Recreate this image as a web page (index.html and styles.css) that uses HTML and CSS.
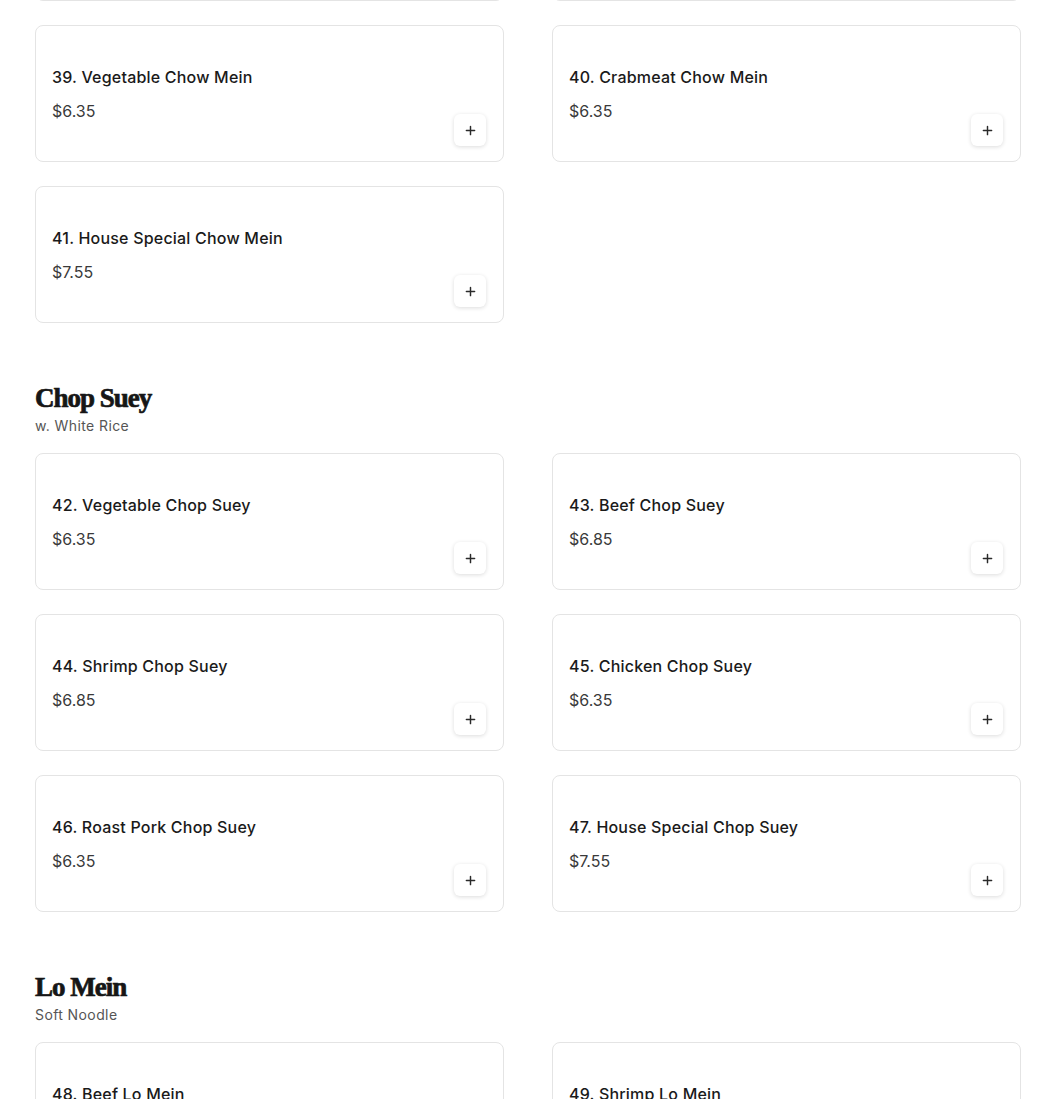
FILE: index.html
```html
<!DOCTYPE html>
<html lang="en">
<head>
<meta charset="utf-8">
<title>Menu</title>
<link rel="stylesheet" href="styles.css">
</head>
<body>
<main class="menu">
  <section class="section section-first">
    <div class="grid">
      <div class="card card-stub" aria-hidden="true"></div>
      <div class="card card-stub" aria-hidden="true"></div>
      <div class="card"><div class="info"><div class="name">39. Vegetable Chow Mein</div><div class="price">$6.35</div></div><button class="add" aria-label="Add"><svg viewBox="0 0 12 12" width="12" height="12"><path d="M6 1.5v9M1.5 6h9" stroke="currentColor" stroke-width="1.6" fill="none" stroke-linecap="round"/></svg></button></div>
      <div class="card"><div class="info"><div class="name">40. Crabmeat Chow Mein</div><div class="price">$6.35</div></div><button class="add" aria-label="Add"><svg viewBox="0 0 12 12" width="12" height="12"><path d="M6 1.5v9M1.5 6h9" stroke="currentColor" stroke-width="1.6" fill="none" stroke-linecap="round"/></svg></button></div>
      <div class="card"><div class="info"><div class="name">41. House Special Chow Mein</div><div class="price">$7.55</div></div><button class="add" aria-label="Add"><svg viewBox="0 0 12 12" width="12" height="12"><path d="M6 1.5v9M1.5 6h9" stroke="currentColor" stroke-width="1.6" fill="none" stroke-linecap="round"/></svg></button></div>
    </div>
  </section>

  <section class="section">
    <h2 class="title">Chop Suey</h2>
    <p class="subtitle">w. White Rice</p>
    <div class="grid">
      <div class="card"><div class="info"><div class="name">42. Vegetable Chop Suey</div><div class="price">$6.35</div></div><button class="add" aria-label="Add"><svg viewBox="0 0 12 12" width="12" height="12"><path d="M6 1.5v9M1.5 6h9" stroke="currentColor" stroke-width="1.6" fill="none" stroke-linecap="round"/></svg></button></div>
      <div class="card"><div class="info"><div class="name">43. Beef Chop Suey</div><div class="price">$6.85</div></div><button class="add" aria-label="Add"><svg viewBox="0 0 12 12" width="12" height="12"><path d="M6 1.5v9M1.5 6h9" stroke="currentColor" stroke-width="1.6" fill="none" stroke-linecap="round"/></svg></button></div>
      <div class="card"><div class="info"><div class="name">44. Shrimp Chop Suey</div><div class="price">$6.85</div></div><button class="add" aria-label="Add"><svg viewBox="0 0 12 12" width="12" height="12"><path d="M6 1.5v9M1.5 6h9" stroke="currentColor" stroke-width="1.6" fill="none" stroke-linecap="round"/></svg></button></div>
      <div class="card"><div class="info"><div class="name">45. Chicken Chop Suey</div><div class="price">$6.35</div></div><button class="add" aria-label="Add"><svg viewBox="0 0 12 12" width="12" height="12"><path d="M6 1.5v9M1.5 6h9" stroke="currentColor" stroke-width="1.6" fill="none" stroke-linecap="round"/></svg></button></div>
      <div class="card"><div class="info"><div class="name">46. Roast Pork Chop Suey</div><div class="price">$6.35</div></div><button class="add" aria-label="Add"><svg viewBox="0 0 12 12" width="12" height="12"><path d="M6 1.5v9M1.5 6h9" stroke="currentColor" stroke-width="1.6" fill="none" stroke-linecap="round"/></svg></button></div>
      <div class="card"><div class="info"><div class="name">47. House Special Chop Suey</div><div class="price">$7.55</div></div><button class="add" aria-label="Add"><svg viewBox="0 0 12 12" width="12" height="12"><path d="M6 1.5v9M1.5 6h9" stroke="currentColor" stroke-width="1.6" fill="none" stroke-linecap="round"/></svg></button></div>
    </div>
  </section>

  <section class="section">
    <h2 class="title">Lo Mein</h2>
    <p class="subtitle">Soft Noodle</p>
    <div class="grid">
      <div class="card"><div class="info"><div class="name">48. Beef Lo Mein</div><div class="price">$6.85</div></div><button class="add" aria-label="Add"><svg viewBox="0 0 12 12" width="12" height="12"><path d="M6 1.5v9M1.5 6h9" stroke="currentColor" stroke-width="1.6" fill="none" stroke-linecap="round"/></svg></button></div>
      <div class="card"><div class="info"><div class="name">49. Shrimp Lo Mein</div><div class="price">$6.85</div></div><button class="add" aria-label="Add"><svg viewBox="0 0 12 12" width="12" height="12"><path d="M6 1.5v9M1.5 6h9" stroke="currentColor" stroke-width="1.6" fill="none" stroke-linecap="round"/></svg></button></div>
    </div>
  </section>
</main>
</body>
</html>
```

FILE: styles.css
```css
* { box-sizing: border-box; }

html, body {
  margin: 0;
  padding: 0;
  background: #ffffff;
  overflow: hidden;
}

body {
  font-family: "Inter", "Open Sans", sans-serif;
  color: #1a1a1a;
}

.menu {
  padding-left: 35px;
  width: 1021px;
}

.section-first {
  margin-top: -136px;
}

.section {
  padding-bottom: 59px;
}

.grid {
  display: grid;
  grid-template-columns: 469px 469px;
  column-gap: 48px;
  row-gap: 24px;
}

.title {
  margin: 0;
  font-family: "Liberation Serif", "Times New Roman", serif;
  font-weight: 700;
  font-size: 27px;
  line-height: 32px;
  letter-spacing: -1px;
  color: #161616;
  -webkit-text-stroke: 0.7px #161616;
}

.subtitle {
  margin: 2px 0 17px;
  font-size: 14px;
  line-height: 20px;
  letter-spacing: 0.4px;
  color: #555555;
}

.card {
  height: 137px;
  border: 1px solid #e4e4e4;
  border-radius: 8px;
  padding: 39px 16px 15px;
  display: flex;
  justify-content: space-between;
  align-items: flex-end;
  background: #fff;
}

.info {
  align-self: flex-start;
}

.name {
  font-size: 16px;
  line-height: 24px;
  font-weight: 500;
  letter-spacing: 0.2px;
  color: #1a1a1a;
}

.price {
  margin-top: 10px;
  font-size: 16px;
  line-height: 24px;
  color: #3a3a3a;
}

.add {
  width: 32px;
  height: 32px;
  margin-right: 1px;
  padding: 0;
  border: none;
  border-radius: 6px;
  background: #fff;
  color: #2a2a2a;
  display: flex;
  align-items: center;
  justify-content: center;
  box-shadow: 0 1px 4px rgba(0, 0, 0, 0.14);
}

.add svg {
  width: 11px;
  height: 11px;
}
```
